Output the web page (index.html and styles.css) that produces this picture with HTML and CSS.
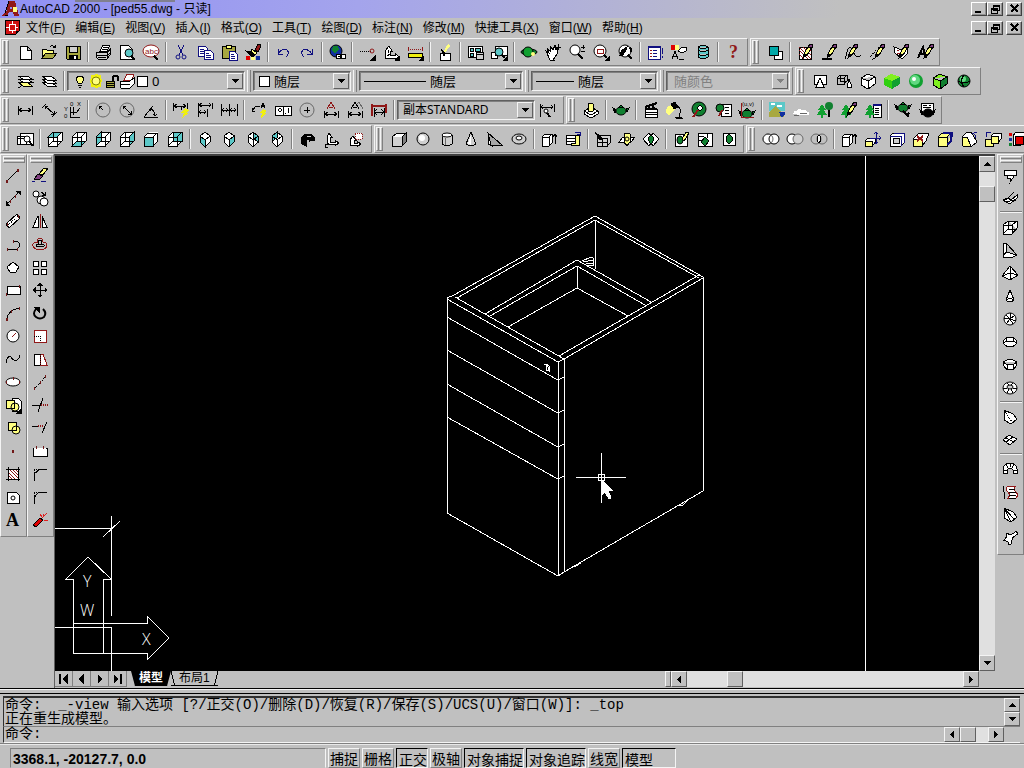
FILE: index.html
```html
<!DOCTYPE html>
<html lang="zh-CN">
<head>
  <meta charset="UTF-8">
  <meta name="viewport" content="width=device-width, initial-scale=1.0">
  <title>AutoCAD 2000 - [ped55.dwg - 只读]</title>
  <link rel="stylesheet" href="styles.css">
</head>
<body>
  <!-- Shared icon parts -->
  <svg class="defs">
    <defs>
      <path id="cube" d="M2 7h9v9h-9zM2 7l5-5h9l-5 5M16 2v9l-5 5M7 2v9h9M7 11l-5 5"/>
      <path id="cubefill" class="w n" d="M2 7l5-5h9v9l-5 5h-9z"/>
      <path id="iso" d="M9 2l5 4v6l-5 5l-5-5v-6zM4 6l5 4l5-4M9 10v7"/>
      <path id="isofill" class="w n" d="M9 2l5 4v6l-5 5l-5-5v-6z"/>
      <path id="box" d="M2 6l7-4l7 3v7l-7 5l-7-4zM2 6l7 3l7-4M9 9v8"/>
      <path id="solid" d="M2 7h9v9h-9zM2 7l4-4h9l-4 4M15 3v9l-4 4"/>
      <g id="pencil"><path class="y" d="M8 11l5-9l3 2l-5 8z"/><path class="purple" d="M12 4l2-3l3 1l-1 3z"/><path class="k" d="M8 11l-1 4l4-3z"/></g>
      <path id="tree" class="tree n" d="M6 3l-4 6h2l-3 5h4v3h2v-3h4l-3-5h2z"/>
      <g id="teapot"><ellipse class="g" cx="9" cy="10" rx="5" ry="4"/><path class="g" d="M4 9l-3-2l2 5zM14 8l3-1l-2 4zM7 6l2-2l2 2z"/></g>
      <path id="fan" class="w" d="M3 2l9 4l4 5l-6 5l-7-4z"/>
    </defs>
  </svg>

  <!-- Title bar -->
  <header class="titlebar">
    <svg class="logo"><path class="red n" d="M7 1h6l4 15h-5l-1-4h-4l-2 4h-5l2-3h2zM9 5l-1 4h2z"/><path d="M3 15h3M7 1l-4 12"/><path class="y n" d="M11 7h4v5h-4z"/></svg>
    <h1>AutoCAD 2000 - [ped55.dwg - 只读]</h1>
    <div class="winbuttons">
      <button aria-label="最小化"><svg><path class="k n" d="M3 8h6v2h-6z"/></svg></button>
      <button aria-label="还原"><svg><path d="M5 2h6v5h-6zM5 3h6M3 5h6v5h-6zM3 6h6"/></svg></button>
      <button class="close" aria-label="关闭"><svg><path class="bold" d="M4 2l7 7M11 2l-7 7"/></svg></button>
    </div>
  </header>

  <!-- Menu -->
  <nav class="menubar">
    <svg class="docicon"><path class="docred" d="M1 1h14v11l-3 3h-11z"/><path class="ws" d="M8 2v3M2 8h3M8 11v3M11 8h3M5 5h6v6h-6z"/><path class="w" d="M12 15v-3h3z"/></svg>
    <button>文件(<u>F</u>)</button>
    <button>编辑(<u>E</u>)</button>
    <button>视图(<u>V</u>)</button>
    <button>插入(<u>I</u>)</button>
    <button>格式(<u>O</u>)</button>
    <button>工具(<u>T</u>)</button>
    <button>绘图(<u>D</u>)</button>
    <button>标注(<u>N</u>)</button>
    <button>修改(<u>M</u>)</button>
    <button>快捷工具(<u>X</u>)</button>
    <button>窗口(<u>W</u>)</button>
    <button>帮助(<u>H</u>)</button>
    <div class="winbuttons">
      <button aria-label="最小化文档"><svg><path class="k n" d="M3 8h6v2h-6z"/></svg></button>
      <button aria-label="还原文档"><svg><path d="M5 2h6v5h-6zM5 3h6M3 5h6v5h-6zM3 6h6"/></svg></button>
      <button class="close" aria-label="关闭文档"><svg><path class="bold" d="M4 2l7 7M11 2l-7 7"/></svg></button>
    </div>
  </nav>

  <!-- Toolbars -->
  <div class="toolrows">
    <div class="toolrow">
      <div class="toolbar">
        <i class="grip"></i>
        <button aria-label="新建"><svg><path class="w" d="M4 3h7l4 4v9h-11zM11 3v4h4"/></svg></button>
        <button aria-label="打开"><svg><path class="y" d="M2 15V6h4l1 1h6v3"/><path class="olive" d="M2 15l4-5h11l-4 5z"/><path d="M10 4q3-3 5 1M15 5l-2-1M15 5v-3"/></svg></button>
        <button aria-label="保存"><svg><path class="olive" d="M2 3h14v13h-13l-1-1z"/><path class="silver" d="M5 3h8v6h-8z"/><path class="k" d="M5 12h8v4h-8z"/><path class="w n" d="M10 13h2v3h-2z"/></svg></button>
        <i class="sep"></i>
        <button aria-label="打印"><svg><path class="w" d="M6 8l3-6h7l-3 6z"/><path d="M9 4h5M8 6h5"/><path class="silver" d="M2 9h11l3-3v6l-3 4h-9l-2-2zM2 12h11M13 9v7"/><path d="M4 14h8M13 10l3-3M13 13l3-3"/></svg></button>
        <button aria-label="打印预览"><svg><path class="w" d="M2 2h8l4 4v10h-12z"/><circle class="c" cx="11" cy="10" r="4"/><path class="bold" d="M13 13l4 4"/></svg></button>
        <button aria-label="查找"><svg><ellipse class="w r" cx="9" cy="8" rx="8" ry="6"/><text class="abc" x="3" y="11">abc</text><path class="bold" d="M12 13l4 4"/></svg></button>
        <i class="sep"></i>
        <button aria-label="剪切"><svg class="b"><path d="M6 2l5 10M12 2l-5 10"/><circle cx="6" cy="14" r="2"/><circle cx="12" cy="14" r="2"/></svg></button>
        <button aria-label="复制"><svg class="b"><path class="w" d="M2 3h7l2 2v8h-9zM4 6h4M4 8h5M4 10h5"/><path class="w" d="M8 7h6l3 3v6h-9zM10 10h3M10 12h5M10 14h5"/></svg></button>
        <button aria-label="粘贴"><svg><path class="olive" d="M2 3h13v12h-13z"/><path class="y" d="M6 2h5v3h-5z"/><path class="w b" d="M9 8h5l3 3v6h-8zM11 11h3M11 13h4M11 15h4"/></svg></button>
        <button aria-label="特性匹配"><svg><path class="red" d="M11 7l3-6h2l1 2l-3 6z"/><path class="y" d="M8 6l5 4l-2 2l-4-3z"/><path class="k" d="M2 8l5 1l4 3l-3 2z"/><path class="rf n" d="M2 13h4v4h-4z"/><path class="y n" d="M7 14h4v3h-4z"/><path class="bf n" d="M12 13h4v4h-4z"/></svg></button>
        <i class="sep"></i>
        <button aria-label="放弃"><svg class="b"><path d="M4 6v5h5M4 11q4-6 9-4q3 3-1 7"/></svg></button>
        <button aria-label="重做"><svg class="b"><path d="M14 6v5h-5M14 11q-4-6-9-4q-3 3 1 7"/></svg></button>
        <i class="sep"></i>
        <button aria-label="超级链接"><svg><circle class="bf" cx="8" cy="8" r="6"/><path class="g n" d="M5 3h5l1 3l-4 4l-3-2z"/><path class="w" d="M8 11h5v4h-5zM12 11h5v4h-5zM10 13h4"/></svg></button>
        <i class="sep"></i>
        <button aria-label="追踪"><svg><path class="dash" d="M2 8h11"/><circle class="r" cx="14" cy="8" r="2"/><path class="k" d="M17 13v4h-4z"/></svg></button>
        <button aria-label="用户坐标"><svg><path class="w" d="M3 8l4-5l3 5h-2v4h5v-2l4 4l-4 3v-2h-10v-7z"/><path d="M6 7v3M5 13l3-2"/><path class="k" d="M17 14v3h-3z"/></svg></button>
        <button aria-label="距离"><svg><path class="r dash" d="M2 6h14"/><path class="r" d="M2 4v4M16 4v4"/><path class="yy" d="M2 10h14v4h-14z"/><path class="k" d="M17 14v3h-3z"/></svg></button>
        <i class="sep"></i>
        <button aria-label="重画"><svg><path class="w" d="M4 10h10v7h-10z"/><path class="y n" d="M12 1l2 2l-5 7l-2-1z"/><path class="k" d="M5 6l4 4l-1 3z"/></svg></button>
        <i class="sep"></i>
        <button aria-label="视口"><svg><path class="w" d="M2 3h14v11h-14z"/><path class="c" d="M4 5h3v3h-3zM9 5h5v3h-5zM4 10h3v3h-3z"/><path class="silver" d="M10 9h7v7h-7zM10 11h7"/></svg></button>
        <button aria-label="命名视图"><svg><path class="w" d="M5 3h12v9h-12zM1 9h6v6h-6z"/><circle class="c" cx="9" cy="9" r="4"/><path class="bold" d="M12 12l3 3"/><path class="k" d="M17 14v3h-3z"/></svg></button>
        <i class="sep"></i>
        <button aria-label="三维动态观察"><svg><ellipse class="g" cx="9" cy="9" rx="8" ry="3"/><circle class="tree" cx="8" cy="9" r="5"/><circle class="y n" cx="13" cy="11" r="2"/></svg></button>
        <button aria-label="实时平移"><svg><path class="w" d="M2 8l3 2l-2-5l3 3v-5l3 4l2-5v5l3-2l-1 6l-4 6h-3z"/><path d="M14 1v6M11 4h6M9 17h2"/></svg></button>
        <button aria-label="实时缩放"><svg><circle class="w" cx="7" cy="7" r="5"/><path class="bold" d="M10 11l5 5"/><path d="M13 4h4M15 2v4M13 8h4"/></svg></button>
        <button aria-label="窗口缩放"><svg><circle class="w" cx="8" cy="8" r="6"/><path class="r" d="M5 6h6v4h-6z"/><path class="bold" d="M12 12l3 3"/><path class="k" d="M17 14v3h-3z"/></svg></button>
        <button aria-label="缩放上一个"><svg><circle class="w" cx="9" cy="8" r="6"/><path class="k" d="M4 12l2-5l5-3l-1 3l-3 5z"/><path class="bold" d="M12 12l4 4M14 5q2 2 0 4"/></svg></button>
        <i class="sep"></i>
        <button aria-label="特性"><svg class="b"><path class="w" d="M2 3h12v13h-12z"/><path class="bold" d="M2 4h12"/><path class="r" d="M4 7h2M4 10h2M4 13h2"/><path d="M7 7h4M7 10h4M7 13h4M16 5v6M16 13v2"/></svg></button>
        <button aria-label="设计中心"><svg><path class="rf n" d="M1 2h4v5h-4z"/><path class="y n" d="M5 2h4v5h-4z"/><path class="w" d="M8 8l4-4h5l-1 4l-4 2z"/><path d="M2 16l3-8l3 8M3 13h4M9 16h5"/></svg></button>
        <button aria-label="数据库连接"><svg><path class="c" d="M4 4q5-3 10 0v10q-5 3-10 0zM4 7q5 3 10 0M4 11q5 3 10 0M4 4q5 3 10 0"/></svg></button>
        <i class="sep"></i>
        <button aria-label="帮助"><svg><text class="help red" x="5" y="15">?</text></svg></button>
      </div>
      <div class="toolbar">
        <i class="grip"></i>
        <button aria-label="绘图次序"><svg><path class="w" d="M8 8h8v8h-8z"/><path class="teal" d="M3 3h9v9h-9z"/></svg></button>
        <i class="sep"></i>
        <button aria-label="编辑图案填充"><svg><path class="w" d="M3 4h12v12h-12z"/><path class="r" d="M3 7l9 9M3 11l5 5M3 4l12 12M7 4l8 8M11 4l4 4"/><use href="#pencil"/></svg></button>
        <button aria-label="编辑多段线"><svg><path class="bold" d="M2 16h10"/><use href="#pencil"/></svg></button>
        <button aria-label="编辑样条"><svg><path d="M1 16l3-10q3-4 5 2q3 9 8 4"/><use href="#pencil" x="-3"/></svg></button>
        <button aria-label="编辑多线"><svg><path class="dash" d="M2 14l9-10M4 17l12-12"/><use href="#pencil"/></svg></button>
        <button aria-label="编辑属性"><svg><path class="w" d="M2 4l8 3l5-2v6l-5 5l-7-6z"/><path class="r" d="M5 7h2M5 10h3"/><use href="#pencil"/></svg></button>
        <button aria-label="编辑文字"><svg><path class="bold" d="M2 15l5-11l3 11M4 11h5"/><use href="#pencil" x="1"/></svg></button>
      </div>
    </div>

    <div class="toolrow">
      <div class="toolbar">
        <i class="grip"></i>
        <button aria-label="将对象的图层置为当前"><svg><path class="w" d="M2 4h9l5 3h-9z"/><path class="w" d="M2 7h9l5 3h-9z"/><path class="y" d="M2 10h9l5 4h-9zM2 16l5-3"/></svg></button>
        <button aria-label="图层"><svg><path class="w" d="M2 10h9l5 4h-9z"/><path class="w" d="M2 7h9l5 4h-9z"/><path class="w" d="M2 4h9l5 4h-9z"/></svg></button>
        <i class="sep"></i>
        <div class="combo layer">
          <svg class="state"><path class="y" d="M7 4h4l2 3l-2 4h-4l-2-4z"/><path d="M7 13h4M8 15h2"/></svg>
          <svg class="state"><path class="yy n" d="M4 3h2l3-1l3 1h2v2l1 4l-1 3v3h-2l-3 1l-3-1h-2v-3l-1-3l1-4z"/><circle class="y olivestroke" cx="9" cy="9" r="4"/></svg>
          <svg class="state"><path class="olive" d="M3 9h8v6h-8zM3 11h8M3 13h8"/><path class="bold" d="M10 9v-4q2-3 5 0v4"/></svg>
          <svg class="state"><path class="w r" d="M5 8l3-6h7l-2 6z"/><path class="w" d="M1 9h10l4-3v6l-4 4h-9l-1-2zM1 12h10"/></svg>
          <i class="swatch"></i>
          <select aria-label="图层"><option>0</option></select><i class="arrow"></i>
        </div>
        <i class="split"></i>
        <div class="combo color"><i class="swatch"></i><select aria-label="颜色"><option>随层</option></select><i class="arrow"></i></div>
        <i class="split"></i>
        <div class="combo linetype"><i class="line"></i><select aria-label="线型"><option>随层</option></select><i class="arrow"></i></div>
        <i class="split"></i>
        <div class="combo weight"><i class="line"></i><select aria-label="线宽"><option>随层</option></select><i class="arrow"></i></div>
        <i class="split"></i>
        <div class="combo plot"><select aria-label="打印样式" disabled><option>随颜色</option></select><i class="arrow"></i></div>
      </div>
      <div class="toolbar">
        <i class="grip"></i>
        <button aria-label="二维线框"><svg><path class="w" d="M3 3h12v9h-12z"/><path class="w" d="M9 6l4 9h-8z"/></svg></button>
        <button aria-label="三维线框"><svg><path d="M2 6h7v6h-7zM2 6l3-3h7l-3 3M12 3v6l-3 3M5 3v6h7"/><path class="w" d="M14 7l3 8q-3 2-5 0z"/></svg></button>
        <button aria-label="消隐"><svg><use href="#box" class="w"/></svg></button>
        <button aria-label="平面着色"><svg><path class="lime n" d="M1 6l7-4l9 3l-8 4z"/><path class="green n" d="M1 6l8 3v8l-8-4z"/><path class="tree n" d="M9 9l8-4v7l-8 5z"/></svg></button>
        <button aria-label="体着色"><svg><circle class="tree n" cx="9" cy="9" r="7"/><circle class="mint n" cx="8" cy="8" r="5"/><circle class="w n" cx="7" cy="7" r="2"/></svg></button>
        <button aria-label="带边框平面着色"><svg><use href="#box" class="lime"/><path class="g" d="M9 9l7-4v7l-7 5z"/></svg></button>
        <button aria-label="带边框体着色"><svg><circle class="g" cx="9" cy="9" r="6"/><circle class="mint n" cx="8" cy="7" r="3"/><path d="M3 9q6 4 12 0M9 3q-5 6 0 12"/></svg></button>
        <i class="end"></i>
      </div>
    </div>

    <div class="toolrow">
      <div class="toolbar">
        <i class="grip"></i>
        <button aria-label="线性标注"><svg><path d="M2 5v9M16 5v9M3 9h12M6 7l-3 2l3 2M12 7l3 2l-3 2"/></svg></button>
        <button aria-label="对齐标注"><svg><path d="M2 7l4-4M12 16l5-5M5 5l9 8M5 8v-3h3M14 10v3h-3"/></svg></button>
        <button aria-label="坐标标注"><svg><path d="M6 6v10h10M9 14v-8M12 12l4-5M7 11h6"/><text class="tiny" x="0" y="10">Y</text><text class="tiny" x="6" y="5">0</text><text class="tiny" x="13" y="5">X</text><text class="tiny" x="0" y="17">0</text></svg></button>
        <i class="sep"></i>
        <button aria-label="半径标注"><svg><circle class="gs" cx="9" cy="9" r="7"/><path d="M9 9l-4-4M5 8v-3h3"/></svg></button>
        <button aria-label="直径标注"><svg><circle class="gs" cx="9" cy="9" r="7"/><path d="M5 5l8 8M5 8v-3h3M13 10v3h-3"/></svg></button>
        <button aria-label="角度标注"><svg><path d="M2 16l9-11M2 16h14M8 8q5 1 5 7M8 10v-2h3M11 13l2 2l2-2"/></svg></button>
        <i class="sep"></i>
        <button aria-label="快速标注"><svg><path d="M1 2v8M15 2v7M2 5h12M5 3l-3 2l3 2M11 3l3 2l-3 2M9 5v4"/><path class="yy n" d="M13 7l4 2l-3 3h3l-7 5l2-5h-3z"/></svg></button>
        <button aria-label="基线标注"><svg><path d="M2 2v14M16 2v6M11 8v8M3 4h12M3 11h7M6 2l-3 2l3 2M13 2l2 2l-2 2M5 9l-2 2l2 2M8 9l2 2l-2 2"/></svg></button>
        <button aria-label="连续标注"><svg><path d="M1 3v12M9 3v12M17 3v12M2 9h14M4 7l-2 2l2 2M6 7l2 2l-2 2M12 7l-2 2l2 2M14 7l2 2l-2 2"/></svg></button>
        <i class="sep"></i>
        <button aria-label="快速引线"><svg><path d="M2 10l4-5h4M2 7v3h3"/><path d="M11 7l2-5l2 5M12 5h3"/><path class="yy n" d="M13 8l4 2l-3 2h2l-5 5l1-5h-2z"/></svg></button>
        <button aria-label="公差"><svg><path class="w" d="M1 5h16v9h-16zM9 5v9M4 9l2-2l2 2l-2 2zM14 7v5M11 12h1"/></svg></button>
        <button aria-label="圆心标记"><svg><circle class="gs" cx="9" cy="9" r="7"/><path d="M9 6v6M6 9h6"/></svg></button>
        <button aria-label="编辑标注"><svg><path class="r" d="M5 8l4-7l4 7M7 6h4"/><path d="M2 10v7M16 10v7M3 13h12M6 11l-3 2l3 2M12 11l3 2l-3 2"/></svg></button>
        <button aria-label="编辑标注文字"><svg><path d="M5 8l4-7l4 7M7 6h4"/><path class="gs" d="M11 3l2-2l4 7"/><path d="M2 10v7M16 10v7M3 13h12M6 11l-3 2l3 2M12 11l3 2l-3 2"/></svg></button>
        <button aria-label="标注更新"><svg><path class="r bold" d="M2 3v12M16 3v9M2 5h14"/><path d="M4 7v9M14 7v9M4 11h10M7 8l-3 3l3 3M11 8l3 3l-3 3"/></svg></button>
        <i class="sep"></i>
        <div class="combo style"><select aria-label="标注样式"><option>副本STANDARD</option></select><i class="arrow"></i></div>
        <button aria-label="标注样式管理"><svg><path d="M2 3v13M16 3v8M3 6h12M5 4l-2 2l2 2M13 4l2 2l-2 2"/><circle class="w" cx="8" cy="10" r="2"/><path class="bold" d="M9 12l3 4"/></svg></button>
        <i class="end"></i>
      </div>
      <div class="toolbar">
        <i class="grip"></i>
        <button aria-label="消隐渲染"><svg><path class="w" d="M2 10l7-4l7 4v3l-7 4l-7-4z"/><path class="y" d="M6 3q3-2 5 0v7q-3 2-5 0z"/><path d="M2 10l7 4l7-4"/></svg></button>
        <i class="sep"></i>
        <button aria-label="渲染"><svg><use href="#teapot"/></svg></button>
        <i class="sep"></i>
        <button aria-label="场景"><svg><path class="w" d="M3 8h12v8h-12zM3 11h12M3 13h12"/><path class="bold" d="M3 6l12-4M3 8h12M6 5l2 3M10 4l2 3"/></svg></button>
        <button aria-label="光源"><svg><path class="y n" d="M1 6l6-3l2 5l-6 7l-3-4z"/><path class="k" d="M5 3l4-2l3 5l-4 2z"/><path d="M11 4l4 5l-2 7M9 16h7M10 17h7"/></svg></button>
        <button aria-label="材质"><svg><circle class="g" cx="9" cy="8" r="7"/><path class="w" d="M7 7l3-3l3 3l-3 3z"/><path class="bold r" d="M8 9l-5 7"/></svg></button>
        <button aria-label="材质库"><svg><path class="w" d="M7 3h10v12h-10zM11 6h4M11 9h4M11 12h4"/><circle class="g" cx="6" cy="7" r="4"/><path class="bold r" d="M8 9l-3 6"/></svg></button>
        <button aria-label="贴图"><svg><use href="#teapot" y="3"/><path class="r" d="M3 2v14h13"/><text class="tiny" x="4" y="5">(u,v)</text></svg></button>
        <i class="sep"></i>
        <button aria-label="背景"><svg><path class="c n" d="M1 1h16v9h-16z"/><path class="w n" d="M3 2h4v2h-4zM9 4h5v2h-5z"/><path class="olive n" d="M1 16v-5l6-6l9 9v2z"/><path class="bf n" d="M11 11h6v2l-2 3h-2z"/></svg></button>
        <button aria-label="雾化"><svg><path class="w n" d="M1 13q1-4 4-3q2-4 5-1q4-1 5 2q3 0 2 3h-9z"/><path class="gs" d="M2 14h5M8 12h7"/></svg></button>
        <button aria-label="新建配景"><svg><path class="bold" d="M13 8v8"/><circle class="g n" cx="13" cy="5" r="4"/><use href="#tree"/></svg></button>
        <button aria-label="编辑配景"><svg><use href="#tree"/><use href="#pencil"/></svg></button>
        <button aria-label="配景库"><svg><path class="w" d="M9 3h8v13h-8zM11 7h4M11 9h4M11 11h4M11 13h4"/><path class="bold b" d="M9 4h8"/><use href="#tree"/></svg></button>
        <i class="sep"></i>
        <button aria-label="渲染设置"><svg><use href="#teapot" y="-3"/><path class="bold" d="M9 10l6 6M12 15l3-3"/></svg></button>
        <button aria-label="统计信息"><svg><path class="w" d="M3 2h12v11h-12zM5 4h4M5 6h8M11 4h2"/><ellipse class="k" cx="10" cy="12" rx="5" ry="4"/><path class="k" d="M5 11l-3-2l2 5zM14 11l3-2l-2 5z"/></svg></button>
      </div>
    </div>

    <div class="toolrow last">
      <div class="toolbar">
        <i class="grip"></i>
        <button aria-label="命名视图"><svg><path class="w" d="M4 3h13v11h-13zM1 6h9v8h-9z"/><path d="M1 8h9"/><circle class="w" cx="11" cy="9" r="3"/><path class="bold" d="M13 11l4 5"/></svg></button>
        <i class="sep"></i>
        <button aria-label="俯视图"><svg><use href="#cubefill"/><path class="c" d="M2 7l5-5h9l-5 5z"/><use href="#cube"/></svg></button>
        <button aria-label="仰视图"><svg><use href="#cubefill"/><path class="c" d="M2 16l5-5h9l-5 5z"/><use href="#cube"/></svg></button>
        <button aria-label="左视图"><svg><use href="#cubefill"/><path class="c" d="M2 7l5-5v9l-5 5z"/><use href="#cube"/></svg></button>
        <button aria-label="右视图"><svg><use href="#cubefill"/><path class="c" d="M11 7l5-5v9l-5 5z"/><use href="#cube"/></svg></button>
        <button aria-label="主视图"><svg><use href="#cubefill"/><path class="c" d="M2 7h9v9h-9z"/><use href="#solid"/></svg></button>
        <button aria-label="后视图"><svg><use href="#cubefill"/><path class="c" d="M7 2h9v9h-9z"/><use href="#cube"/></svg></button>
        <i class="sep"></i>
        <button aria-label="西南等轴测"><svg><use href="#isofill"/><path class="c" d="M4 6l5 4v7l-5-5z"/><use href="#iso"/></svg></button>
        <button aria-label="东南等轴测"><svg><use href="#isofill"/><path class="c" d="M14 6l-5 4v7l5-5z"/><use href="#iso"/></svg></button>
        <button aria-label="东北等轴测"><svg><use href="#isofill"/><path class="c" d="M9 2l5 4v6l-5-4z"/><use href="#iso"/></svg></button>
        <button aria-label="西北等轴测"><svg><use href="#isofill"/><path class="c" d="M9 2l-5 4v5l5-3z"/><use href="#iso"/></svg></button>
        <i class="sep"></i>
        <button aria-label="相机"><svg><path class="k" d="M3 8l4-4h6l3 3v3h-3l-2 2v-3h-3v7l-4-2z"/><path class="silver" d="M8 5h4l2 2h-5z"/></svg></button>
        <button aria-label="UCS"><svg><path class="w" d="M5 7l2-4l3 4h-2v5h5v-2l4 3l-4 3v-2h-8z"/><path d="M7 13l-4 3M3 14v3h3"/></svg></button>
        <button aria-label="命名UCS"><svg><path class="w r dash" d="M9 3h7v6h-7z"/><path class="w" d="M4 10l3-4l3 4h-2v3h3v-2l4 3l-4 3v-2h-7z"/></svg></button>
        <i class="end"></i>
      </div>
      <div class="toolbar">
        <i class="grip"></i>
        <button aria-label="长方体"><svg><path class="silver" d="M2 7l5-4h9v9l-4 4h-10z"/><path class="w n" d="M3 7l4-3h8l-3 3z"/><path class="d" d="M12 7l4-4v9l-4 4z"/></svg></button>
        <button aria-label="球体"><svg><circle class="silver" cx="9" cy="9" r="6"/><circle class="w n" cx="8" cy="8" r="3"/></svg></button>
        <button aria-label="圆柱体"><svg><path class="silver" d="M4 5v9q5 4 10 0v-9z"/><ellipse class="w" cx="9" cy="5" rx="5" ry="2"/><path class="gs" d="M7 8v7"/></svg></button>
        <button aria-label="圆锥体"><svg><path class="silver" d="M9 2l5 12q-5 4-10 0z"/><path class="w n" d="M9 4v11l-3-1z"/></svg></button>
        <button aria-label="楔体"><svg><path class="w" d="M2 3v11l4 2z"/><path class="mid" d="M2 3l14 12h-11z"/></svg></button>
        <button aria-label="圆环"><svg><ellipse class="silver" cx="9" cy="9" rx="7" ry="5"/><ellipse class="w" cx="9" cy="8" rx="3" ry="2"/></svg></button>
        <i class="sep"></i>
        <button aria-label="拉伸"><svg><path class="w" d="M2 7l3-3h7v9l-3 3h-7z"/><path d="M2 7h7v9M9 7l3-3M15 14v-10M13 7l2-3l2 3"/></svg></button>
        <button aria-label="旋转"><svg><path class="w" d="M2 5h9v9h-9zM2 8h9M2 11h9"/><path class="y" d="M11 5h4v10h-8v-2h4z"/><path class="b" d="M11 2h5v4M13 4h3"/></svg></button>
        <i class="sep"></i>
        <button aria-label="剖切"><svg><path class="silver" d="M3 8h10v8h-10zM3 8l3-3h10v8l-3 3"/><path class="k" d="M1 2l8 7l-3 1z"/><path d="M3 12h10M8 8v8"/></svg></button>
        <button aria-label="截面"><svg><path class="w" d="M5 7h12l-4 5h-12z"/><path class="y" d="M6 4q3-2 6 0v8l-3 4l-3-4z"/><circle cx="9" cy="9" r="2"/></svg></button>
        <button aria-label="干涉"><svg><path class="w" d="M1 9l6-6l4 6l-4 7zM17 9l-6-6l-4 6l4 7z"/><path class="g" d="M9 4l3 5l-3 6l-3-6z"/></svg></button>
        <i class="sep"></i>
        <button aria-label="设置图形"><svg><path class="w" d="M3 4h12v12h-12z"/><ellipse class="g" cx="8" cy="10" rx="3" ry="4"/><path class="y" d="M10 9l4-7l3 1l-5 8z"/></svg></button>
        <button aria-label="设置视图"><svg><path class="w" d="M2 3h14v13h-14zM2 6h6M2 10h4M11 3v5"/><path class="g" d="M9 7l4 4l-4 5l-4-4z"/></svg></button>
        <button aria-label="设置轮廓"><svg><path class="w" d="M3 3h12v12h-12z"/><path class="g" d="M9 4l3 3v4l-3 3l-3-3v-4z"/></svg></button>
      </div>
      <div class="toolbar">
        <i class="grip"></i>
        <button aria-label="并集"><svg><circle class="w" cx="6" cy="9" r="5"/><circle class="w" cx="12" cy="9" r="5"/><circle class="gs" cx="6" cy="9" r="5"/></svg></button>
        <button aria-label="差集"><svg><circle class="w" cx="6" cy="9" r="5"/><circle class="silver gs" cx="12" cy="9" r="5"/></svg></button>
        <button aria-label="交集"><svg><circle class="gs" cx="6" cy="9" r="5"/><circle class="gs" cx="12" cy="9" r="5"/><path class="w" d="M9 5q4 4 0 8q-4-4 0-8z"/></svg></button>
        <i class="sep"></i>
        <button aria-label="拉伸面"><svg><path class="w" d="M2 7l3-3h7v9l-3 3h-7z"/><path d="M2 7h7v9M9 7l3-3M15 14v-10M13 7l2-3l2 3"/></svg></button>
        <button aria-label="移动面"><svg><path class="w" d="M1 11l3-3h7v5l-3 3h-7z"/><path class="y" d="M1 11h7v5h-7z"/><path class="b" d="M12 2v12M6 8h11M10 4l2-2l2 2M15 6l2 2l-2 2M10 12l2 2l2-2"/></svg></button>
        <button aria-label="偏移面"><svg><path class="w" d="M2 6l3-3h11v10l-3 3h-11z"/><path class="b" d="M2 6h11v10M6 3h10v10"/><path class="silver" d="M5 8h6v5h-6z"/></svg></button>
        <button aria-label="删除面"><svg><path class="w" d="M1 9l6-6h10l-3 8l-4 5h-9z"/><path class="y" d="M1 9h9v7h-9z"/><path class="bold r" d="M5 6l6 5M11 6l-6 5"/></svg></button>
        <button aria-label="旋转面"><svg><use href="#solid" class="y"/><path class="bold b" d="M7 3q10-2 8 8l-4 4M11 3h5v4"/></svg></button>
        <button aria-label="倾斜面"><svg><path class="w" d="M2 7l5-5h4l5 8v3l-4 3h-8z"/><path class="y" d="M2 7h5l4 9h-8z"/><path class="b" d="M12 3q4 1 4 5M14 2h3"/></svg></button>
        <button aria-label="复制面"><svg><path class="y" d="M1 9h8v7h-8z"/><path class="w" d="M7 6l3-3h7v6l-3 4h-7z"/><path class="y" d="M7 6h7v7h-7z"/><path class="b" d="M7 2h-5v5"/></svg></button>
        <button aria-label="着色面"><svg><path class="w" d="M5 6l3-4h9v9l-4 4h-8z"/><path class="rf" d="M7 6h8v8h-8z"/><path class="rf n" d="M1 3h3v3h-3z"/><path class="bf n" d="M1 8h3v3h-3z"/><path class="g n" d="M1 13h3v3h-3z"/></svg></button>
      </div>
    </div>
  </div>

  <!-- Work area -->
  <main class="workspace">
    <div class="toolbar side">
      <i class="grip"></i>
      <button aria-label="直线"><svg><path d="M3 15L14 4"/><path class="dot" d="M2 15h2M13 4h2"/></svg></button>
      <button aria-label="构造线"><svg><path d="M2 16l14-14M2 12v4h4M12 2h4v4M3 13v2h2M13 3h2v2"/><path class="dot" d="M6 12h1M11 7h1"/></svg></button>
      <button aria-label="多线"><svg><path class="w" d="M2 12l11-10l3 4l-11 10z"/><path class="dash" d="M4 13l10-9"/><path class="dot" d="M3 12h1M14 4h1"/></svg></button>
      <button aria-label="多段线"><svg><path d="M3 14h10q5-4 0-8h-3"/><path class="dot" d="M3 14h1M13 14h1M9 6h1"/></svg></button>
      <button aria-label="正多边形"><svg><path class="w" d="M9 4l6 5l-3 5h-6l-3-5z"/></svg></button>
      <button aria-label="矩形"><svg><path class="w" d="M3 5h13v8h-13z"/><path class="dot" d="M2 13h1M15 5h1"/></svg></button>
      <button aria-label="圆弧"><svg><path d="M3 15q1-9 12-11"/><path class="dot" d="M2 15h2M7 7h1M15 4h1"/></svg></button>
      <button aria-label="圆"><svg><circle class="w" cx="9" cy="9" r="6"/><path class="r" d="M8 10l4-4"/></svg></button>
      <button aria-label="样条曲线"><svg><path d="M2 13q1-8 5-6q3 5 6 3q3-2 3-5"/></svg></button>
      <button aria-label="椭圆"><svg><ellipse class="w" cx="9" cy="9" rx="7" ry="4"/><path class="dot" d="M2 9h1M15 9h1M9 5h1"/></svg></button>
      <button aria-label="插入块"><svg><path class="w" d="M8 2h6l3 3v10h-9z"/><path class="y" d="M2 4h8v8h-8z"/><circle class="y" cx="11" cy="11" r="4"/><path d="M10 4v8h-5"/><path class="k" d="M17 13v4h-4z"/></svg></button>
      <button aria-label="创建块"><svg><path class="y" d="M4 3h8v8h-8z"/><circle class="y" cx="12" cy="11" r="4"/><path d="M12 7v4h-4"/></svg></button>
      <button aria-label="点"><svg><path class="dot" d="M8 9h2"/></svg></button>
      <button aria-label="图案填充"><svg><path class="w r" d="M4 4h10v10h-10zM4 7l7 7M4 10l4 4M5 4l9 9M8 4l6 6M11 4l3 3"/><path d="M4 2v14M14 2v14M2 4h14M2 14h14"/></svg></button>
      <button aria-label="面域"><svg><path class="w" d="M3 4h9l3 3v8h-12z"/><circle cx="9" cy="10" r="2"/></svg></button>
      <button aria-label="多行文字"><svg><text class="letter" x="2" y="15">A</text></svg></button>
    </div>
    <div class="toolbar side">
      <i class="grip"></i>
      <button aria-label="删除"><svg><path class="y" d="M8 8l5-6h4l-5 7z"/><path class="purple" d="M3 13l4-5l5 2l-4 4z"/><path class="b" d="M1 15h3M10 15h5"/></svg></button>
      <button aria-label="复制对象"><svg><circle class="w" cx="5" cy="5" r="3"/><circle class="w" cx="10" cy="11" r="4"/><circle class="w" cx="13" cy="13" r="4"/><path d="M10 3l4 3M14 3v3h-3"/></svg></button>
      <button aria-label="镜像"><svg><path class="w" d="M7 4v11h-5zM11 4v11h5z"/><path class="r" d="M9 2v14"/></svg></button>
      <button aria-label="偏移"><svg><path class="r" d="M2 9q1-2 4-2q0-4 3-4t3 4q4 0 4 3t-3 4h-8q-4-2-3-5z"/><path d="M5 11q0-2 3-2q-1-4 1-4t1 4q4 0 3 2z"/></svg></button>
      <button aria-label="阵列"><svg><path class="w" d="M2 3h5v5h-5zM10 3h5v5h-5zM2 11h5v5h-5zM10 11h5v5h-5z"/></svg></button>
      <button aria-label="移动"><svg><path d="M9 3v12M3 9h12"/><path class="k" d="M7 4l2-2l2 2zM7 14l2 2l2-2zM4 7l-2 2l2 2zM14 7l2 2l-2 2z"/></svg></button>
      <button aria-label="旋转"><svg><path class="bold round" d="M5 5q-4 5 0 8q4 3 8 0q3-4-1-8"/><path class="k" d="M3 3h5v5z"/></svg></button>
      <button aria-label="缩放"><svg><path class="w r" d="M3 3h12v12h-12z"/><path class="dash" d="M3 9h6v6"/></svg></button>
      <button aria-label="拉伸"><svg><path class="w" d="M3 4h6v11h-6z"/><path class="w r" d="M9 4h3l4 11h-7z"/><path class="dash" d="M9 4v11"/></svg></button>
      <button aria-label="拉长"><svg><path class="dash" d="M4 15l11-12"/><path class="dot" d="M3 15h1M14 3h1M9 9h1"/></svg></button>
      <button aria-label="修剪"><svg><path d="M1 9h8M7 16l5-14"/><path class="r dash bold" d="M10 9h7"/></svg></button>
      <button aria-label="延伸"><svg><path d="M1 7h6M11 14l5-11"/><path class="r dash bold" d="M7 7h6"/></svg></button>
      <button aria-label="打断"><svg><path class="w" d="M5 6h-3v8h14v-8h-3"/><path class="w n" d="M3 6h12v7h-12z"/><path class="dot" d="M5 5h1M12 5h1"/></svg></button>
      <button aria-label="倒角"><svg><path d="M3 16v-7l6-5h7"/><path class="dash" d="M3 8v-4h5"/></svg></button>
      <button aria-label="圆角"><svg><path d="M3 16v-4q1-7 7-8h6"/><path class="dash" d="M3 8v-4h5"/></svg></button>
      <button aria-label="分解"><svg><path class="rf" d="M2 14l7-7l3 2l-7 7z"/><path class="rs" d="M11 7l5-5M12 3v3M13 9h4M9 3l2 3"/></svg></button>
    </div>

    <div class="docwindow">
      <svg class="drawing" role="img" aria-label="ped55.dwg">
        <g transform="translate(-55 -156)">
          <!-- cabinet -->
          <path d="M447 298L454 295L595 216L703 277V491L564 572L558 576L447 513V298"/>
          <path d="M457 298L595 220L699 278"/>
          <path d="M447 299L558 362L564 359M455 297L564 359L703 278M559 356L699 275"/>
          <path d="M595 220V269M558 362V576M564 359V572"/>
          <path d="M447 317L556 379L560 379L564 377M447 350L556 412L560 412L564 410M447 384L556 446L560 446L564 444M447 417L556 478L560 478L564 476"/>
          <!-- drawer -->
          <path d="M485 314L577 260L651 302M490 316L577 266L645 305M577 266V288M508 327L577 288L628 316"/>
          <path d="M582 261L591 257L593 258V266M583 262L593 260M586 263L593 263M588 265L593 265"/>
          <path d="M544 364H546L548 367V371M546 364V370L549 371V366L547 364"/>
          <path d="M572 567L576 566L581 563M677 505L683 505L686 502V500"/>
          <path d="M865 156V671"/>
          <!-- crosshair -->
          <path d="M576 477H626M601 453V503M598 474H604V480H598z"/>
          <path class="cursor" d="M602 480V495L605 492L609 499L611 498L608 490H612z"/>
          <!-- UCS icon -->
          <path d="M55 528H111M111 516V616M103 537L120 521M55 627H111V671"/>
          <path d="M88 557L66 579H73V653H147V660L169 638L147 616V623H73M88 557L111 579H103V653"/>
          <text x="83" y="587">Y</text><text x="80" y="616">W</text><text x="142" y="645">X</text>
        </g>
      </svg>
      <div class="scroll vertical">
        <button class="up" aria-label="向上滚动"></button>
        <i class="thumb"></i>
        <button class="down" aria-label="向下滚动"></button>
      </div>
      <div class="tabrow">
        <div class="tabnav">
          <button aria-label="第一个"><svg><path class="bold" d="M5 3v10"/><path class="k" d="M12 4v8l-4-4z"/></svg></button>
          <button aria-label="上一个"><svg><path class="k" d="M10 4v8l-4-4z"/></svg></button>
          <button aria-label="下一个"><svg><path class="k" d="M7 4v8l4-4z"/></svg></button>
          <button aria-label="最后一个"><svg><path class="k" d="M5 4v8l4-4z"/><path class="bold" d="M12 3v10"/></svg></button>
        </div>
        <button class="tab active">模型</button>
        <button class="tab">布局1</button>
        <div class="scroll horizontal">
          <i class="divider"></i>
          <button class="left" aria-label="向左滚动"></button>
          <i class="thumb"></i>
          <button class="right" aria-label="向右滚动"></button>
        </div>
      </div>
    </div>

    <div class="toolbar side right">
      <i class="grip"></i>
      <button aria-label="二维实体"><svg><path class="w" d="M3 4h12v5h-12zM6 9h6v3l-3 4v-4h-3z"/></svg></button>
      <button aria-label="三维面"><svg><path class="w" d="M2 11l5-2l3 2l6-5v3l-7 6z"/><path d="M5 11l8-8M3 13l12-2"/></svg></button>
      <i class="sep"></i>
      <button aria-label="长方体表面"><svg><path class="w" d="M2 7l5-4h9v7l-5 6h-9zM2 7h9v9M11 7l5-4M7 3v8h9M7 11l-5 5"/></svg></button>
      <button aria-label="楔体表面"><svg><path class="w" d="M2 3l3-1l11 12l-4 2h-10zM5 2v9l11 3M5 11l-3 5"/></svg></button>
      <button aria-label="棱锥面"><svg><path class="w" d="M9 2l8 9l-8 5l-8-4zM9 2v14M1 12l8-3l8 2"/></svg></button>
      <button aria-label="圆锥面"><svg><path class="w" d="M9 3l4 10q-4 4-8 0zM5 13q4-3 8 0"/></svg></button>
      <button aria-label="球面"><svg><circle class="w" cx="9" cy="9" r="6"/><path d="M3 8l6 1l5-4M9 9l-4 5M9 9l3 5M9 3v6l6 2M5 5l4 4"/></svg></button>
      <button aria-label="上半球面"><svg><path class="w" d="M2 10q1-6 7-6t7 6q-7 8-14 0zM2 10q7-4 14 0M6 5l-1 4M12 5l1 4"/></svg></button>
      <button aria-label="下半球面"><svg><path class="w" d="M2 6q7-5 14 0q-1 8-7 8t-7-8zM2 6q7 6 14 0M6 8v5M12 8v5"/></svg></button>
      <button aria-label="圆环面"><svg><ellipse class="w" cx="9" cy="9" rx="7" ry="6"/><ellipse class="silver" cx="9" cy="8" rx="3" ry="2"/><path d="M2 9h4M12 9h4M6 4l2 2M12 4l-2 2M6 14l2-4M12 14l-2-4"/></svg></button>
      <i class="sep"></i>
      <button aria-label="边"><svg><use href="#fan"/><path class="dash" d="M3 2l8 12"/></svg></button>
      <button aria-label="三维网格"><svg><path class="w" d="M2 9l6-5l8 4l-7 6zM5 7l8 4M12 6l-7 5"/></svg></button>
      <i class="sep"></i>
      <button aria-label="旋转曲面"><svg><path class="w" d="M2 9q1-6 7-6t7 6v4h-4v-3q-3-4-6 0v3h-4zM5 4l2 4M13 4l-2 4M9 3v4M2 10h4M12 10h4"/></svg></button>
      <button aria-label="平移曲面"><svg><path d="M3 3q-2 3 0 6t0 7"/><path class="w r" d="M7 3h8q-3 3 0 6t0 6h-8q3-3 0-6t0-6z"/><path d="M8 6h6M8 9h7M8 12h7M8 15h7"/></svg></button>
      <button aria-label="直纹曲面"><svg><use href="#fan"/><path d="M3 2l7 14M3 2l10 11"/></svg></button>
      <button aria-label="边界曲面"><svg><path class="w" d="M6 4q4 4 9-2l2 3q-6 3-6 6q0 5-3 5q0-5-6-4q4-3 4-8z"/></svg></button>
    </div>
  </main>

  <!-- Command line -->
  <section class="command">
    <div class="history">
      <div class="log">
        <p>命令:&nbsp; _-view 输入选项 [?/正交(O)/删除(D)/恢复(R)/保存(S)/UCS(U)/窗口(W)]: _top</p>
        <p>正在重生成模型。</p>
      </div>
      <div class="scroll small">
        <button class="up" aria-label="上一行"></button>
        <button class="down" aria-label="下一行"></button>
      </div>
    </div>
    <div class="prompt">
      <label for="cmd">命令:</label>
      <input id="cmd" type="text">
      <div class="scroll horizontal">
        <button class="left" aria-label="向左"></button>
        <i class="thumb"></i>
        <button class="right" aria-label="向右"></button>
      </div>
    </div>
  </section>

  <!-- Status bar -->
  <footer class="statusbar">
    <output class="coords">3368.1, -20127.7, 0.0</output>
    <button>捕捉</button>
    <button>栅格</button>
    <button class="on">正交</button>
    <button>极轴</button>
    <button class="on">对象捕捉</button>
    <button class="on">对象追踪</button>
    <button>线宽</button>
    <button class="on model">模型</button>
  </footer>
</body>
</html>
```
FILE: styles.css
```css
* {
  box-sizing: border-box;
}

body {
  margin: 0;
  height: 100vh;
  display: flex;
  flex-direction: column;
  overflow: hidden;
  background-color: #c0c0c0;
  color: #000;
  font-family: "Liberation Sans", "Noto Sans CJK SC", sans-serif;
  font-size: 12px;
}

button {
  margin: 0;
  padding: 0;
  border: none;
  background: none;
  color: inherit;
  font: inherit;
  flex: none;
}

i {
  display: block;
  flex: none;
}

/* Icon drawing */
svg {
  display: block;
  flex: none;
  width: 18px;
  height: 18px;
  overflow: visible;
  fill: none;
  stroke: #000;
  shape-rendering: crispEdges;
}
circle,
ellipse,
.round {
  shape-rendering: auto;
}
.defs {
  position: absolute;
  width: 0;
  height: 0;
}
.w { fill: #fff; }
.y { fill: #ffff80; }
.yy { fill: #f0f010; }
.c { fill: #5cc8c8; }
.g { fill: #108030; }
.k { fill: #000; }
.d { fill: #808080; }
.mid { fill: #a8a8a8; }
.red { fill: #901818; }
.rf { fill: #e00000; }
.bf { fill: #1030a0; }
.tree { fill: #10a030; }
.green { fill: #30d010; }
.lime { fill: #80f020; }
.mint { fill: #60d880; }
.teal { fill: #00a8a8; }
.olive { fill: #a8a840; }
.silver { fill: #d0d0d0; }
.purple { fill: #804080; }
.docred { fill: #d01010; }
.n { stroke: none; }
.r { stroke: #901818; }
.rs { stroke: #e02020; }
.b { stroke: #101080; }
.ws { stroke: #fff; }
.gs { stroke: #686868; }
.olivestroke { stroke: #808000; }
.bold { stroke-width: 2; }
.dash { stroke-dasharray: 1 1; }
.dot { stroke: #701818; stroke-width: 3; }
svg text {
  fill: #000;
  stroke: none;
}
.tiny { font-size: 6px; }
svg .abc {
  font-size: 8px;
  fill: #901818;
}
svg text.red { fill: #901818; }
.help {
  font: bold 18px "Liberation Serif", serif;
}
.letter {
  font: bold 18px "Liberation Serif", serif;
}

/* Title bar */
.titlebar {
  position: relative;
  height: 18px;
  flex: none;
  display: flex;
  align-items: center;
  padding: 0 2px;
  background: linear-gradient(to right, #9090f4, #a4a4ec 35%, #c0c0c0 82%);
}
.titlebar::before {
  content: "";
  position: absolute;
  left: 75px;
  top: 0;
  width: 100px;
  height: 2px;
  background-color: #808090;
}
.titlebar h1 {
  margin: 0;
  flex: 1;
  font-size: 12px;
  font-weight: normal;
  line-height: 18px;
}
.winbuttons {
  display: flex;
  margin-left: auto;
}
.winbuttons button {
  width: 16px;
  height: 14px;
  border: 1px solid;
  border-color: #fff #404040 #404040 #fff;
  box-shadow: inset -1px -1px #909090;
}
.winbuttons .close {
  margin-left: 3px;
}
.winbuttons svg {
  width: 14px;
  height: 12px;
}

/* Menu */
.menubar {
  height: 20px;
  flex: none;
  display: flex;
  align-items: center;
  gap: 10px;
  padding: 0 2px 0 4px;
}
.menubar > button {
  line-height: 18px;
  white-space: nowrap;
}
.docicon {
  margin-right: -6px;
}

/* Toolbars */
.toolrows {
  flex: none;
  overflow: hidden;
}
.toolrow {
  display: flex;
  gap: 2px;
  margin-bottom: 1px;
}
.toolbar {
  display: flex;
  flex: none;
  align-items: center;
  height: 28px;
  padding: 0 2px 0 1px;
  border: 1px solid;
  border-color: #f4f4f4 #808080 #808080 #f4f4f4;
}
.toolbar > button {
  width: 24px;
  height: 22px;
  padding: 2px 3px;
}
.grip {
  width: 7px;
  height: 24px;
  margin-right: 4px;
  border: 1px solid;
  border-color: #f4f4f4 #808080 #808080 #f4f4f4;
  background: linear-gradient(to right, transparent 1px, #808080 1px, #808080 2px, transparent 2px, transparent 3px, #f4f4f4 3px, #f4f4f4 4px, transparent 4px);
}
.sep {
  width: 2px;
  height: 20px;
  margin: 0 2px;
  border-left: 1px solid #808080;
  border-right: 1px solid #f4f4f4;
}
.split {
  width: 4px;
  height: 22px;
  margin: 0 2px;
  border-left: 1px solid #f4f4f4;
  border-right: 1px solid #808080;
}
.end {
  width: 2px;
}

/* Combo boxes */
.combo {
  display: flex;
  align-items: center;
  height: 20px;
  border: 1px solid;
  border-color: #606060 #f4f4f4 #f4f4f4 #606060;
  box-shadow: inset 1px 1px #808080;
  padding: 1px 1px 1px 3px;
}
.combo select {
  appearance: none;
  flex: 1;
  min-width: 0;
  height: 16px;
  margin: 0;
  padding: 0 4px;
  border: none;
  background: none;
  color: #000;
  font-family: "Noto Sans", "Noto Sans CJK SC", sans-serif;
  font-size: 13px;
  line-height: 16px;
}
.combo select:disabled {
  color: #808080;
  opacity: 1;
}
.arrow {
  width: 16px;
  height: 16px;
  border: 1px solid;
  border-color: #f4f4f4 #606060 #606060 #f4f4f4;
  background: conic-gradient(from 315deg at 50% 100%, #000 90deg, transparent 90deg) center / 7px 4px no-repeat;
}
.plot .arrow {
  background-image: conic-gradient(from 315deg at 50% 100%, #808080 90deg, transparent 90deg);
}
.state {
  width: 16px;
}
.swatch {
  width: 11px;
  height: 11px;
  margin-left: 2px;
  border: 1px solid #000;
  background-color: #fff;
}
.line {
  width: 62px;
  margin-left: 1px;
  border-top: 1px solid #000;
}
.layer { width: 178px; }
.color { width: 98px; }
.linetype { width: 164px; }
.weight { width: 127px; }
.weight .line { width: 38px; }
.plot { width: 124px; }
.style { width: 138px; }
.combo.style select {
  padding: 0 2px;
  font-size: 12px;
}

/* Work area */
.workspace {
  flex: 1;
  min-height: 0;
  display: flex;
  align-items: flex-start;
}
.side {
  flex-direction: column;
  width: 27px;
  height: auto;
  padding: 1px 0 5px;
}
.side > button {
  width: 25px;
  height: 23px;
}
.side .grip {
  width: 22px;
  height: 7px;
  margin: 0;
  background: linear-gradient(transparent 1px, #808080 1px, #808080 2px, transparent 2px, transparent 3px, #f4f4f4 3px, #f4f4f4 4px, transparent 4px);
}
.side .sep {
  width: 22px;
  height: 2px;
  margin: 2px 0;
  border: none;
  border-top: 1px solid #808080;
  border-bottom: 1px solid #f4f4f4;
}
.side.right {
  margin-left: 2px;
}
.docwindow {
  flex: 1;
  min-width: 0;
  align-self: stretch;
  display: grid;
  grid-template-columns: 1fr 16px;
  grid-template-rows: 1fr 16px;
  padding-bottom: 1px;
  border-left: 1px solid #606060;
  border-top: 2px solid #404040;
}
.drawing {
  width: 100%;
  height: 100%;
  background-color: #000;
  stroke: #fff;
  overflow: hidden;
}
.drawing text {
  fill: #fff;
  font: 300 16px "Open Sans", sans-serif;
}
.drawing .cursor {
  fill: #fff;
}

/* Scroll bars */
.scroll {
  display: flex;
  background-color: #e0e0e0;
}
.scroll button,
.thumb,
.divider {
  width: 16px;
  height: 16px;
  border: 1px solid;
  border-color: #f4f4f4 #606060 #606060 #f4f4f4;
  background: #c0c0c0 center / 7px 4px no-repeat;
}
.scroll .up {
  background-image: conic-gradient(from 135deg at 50% 0, #000 90deg, transparent 90deg);
}
.scroll .down {
  background-image: conic-gradient(from 315deg at 50% 100%, #000 90deg, transparent 90deg);
}
.scroll .left {
  background-size: 4px 7px;
  background-image: conic-gradient(from 45deg at 0 50%, #000 90deg, transparent 90deg);
}
.scroll .right {
  background-size: 4px 7px;
  background-image: conic-gradient(from 225deg at 100% 50%, #000 90deg, transparent 90deg);
}
.vertical {
  flex-direction: column;
}
.vertical .thumb {
  margin-top: 14px;
}
.vertical .down {
  margin-top: auto;
}
.horizontal .right {
  margin-left: auto;
}

/* Layout tabs */
.tabrow {
  display: flex;
  grid-column: 1;
}
.tabnav {
  display: flex;
  margin-right: 4px;
}
.tabnav button {
  width: 18px;
  height: 16px;
  border-right: 1px solid #808080;
  border-bottom: 1px solid #808080;
}
.tabnav svg {
  width: 17px;
  height: 15px;
}
.tab {
  height: 15px;
  padding: 0 8px;
  line-height: 14px;
  background: linear-gradient(75deg, transparent 3px, #000 3px, #000 4px, transparent 4px), linear-gradient(-75deg, transparent 3px, #000 3px, #000 4px, transparent 4px);
  border-bottom: 1px solid #000;
}
.tab.active {
  font-weight: bold;
  background: #000;
  color: #fff;
  clip-path: polygon(0 0, 100% 0, 90% 100%, 10% 100%);
}
.tabrow .horizontal {
  margin-left: auto;
  width: 34%;
}
.divider {
  width: 6px;
}
.tabrow .thumb {
  margin-left: 40px;
}

/* Command line */
.command {
  flex: none;
  height: 56px;
  padding: 3px 4px 2px 3px;
  border-top: 1px solid #000;
  border-bottom: 1px solid #808080;
  background: linear-gradient(#f4f4f4 1px, #c0c0c0 1px, #c0c0c0 4px, #000 4px, #000 5px, #c0c0c0 5px);
  font-family: "Liberation Mono", "Noto Sans CJK SC", monospace;
  font-size: 14px;
}
.history {
  display: flex;
  margin-top: 4px;
  border-top: 2px solid #303030;
  border-left: 1px solid #303030;
  border-bottom: 1px solid #808080;
  height: 31px;
}
.log {
  flex: 1;
  min-width: 0;
}
.log p {
  margin: 0;
  padding-left: 1px;
  line-height: 14px;
  white-space: nowrap;
}
.small {
  flex-direction: column;
}
.small button {
  height: 14px;
}
.prompt {
  display: flex;
  align-items: center;
  padding-right: 16px;
  height: 16px;
  border-left: 1px solid #303030;
  border-bottom: 1px solid #f4f4f4;
}
.prompt label {
  padding-left: 1px;
  line-height: 15px;
}
.prompt input {
  flex: 1;
  min-width: 0;
  height: 15px;
  padding: 0;
  border: none;
  outline: none;
  background: none;
  font: inherit;
}
.prompt .scroll {
  width: 60px;
}
.prompt .scroll > * {
  height: 15px;
}

/* Status bar */
.statusbar {
  flex: none;
  display: flex;
  gap: 2px;
  height: 24px;
  padding: 3px 0 0 10px;
  border-top: 1px solid #e8e8e8;
  font-size: 14px;
  line-height: 20px;
}
.coords {
  width: 316px;
  padding-left: 2px;
  border: 1px solid;
  border-color: #808080 #f4f4f4 transparent #808080;
  font-weight: bold;
}
.statusbar button {
  padding: 0 1px;
  border: 1px solid;
  border-color: #f4f4f4 #808080 #808080 #f4f4f4;
}
.statusbar .on {
  padding: 1px 0 0 2px;
  border-color: #000 #f4f4f4 #f4f4f4 #000;
}
.statusbar .model {
  width: 54px;
  text-align: left;
}
```
